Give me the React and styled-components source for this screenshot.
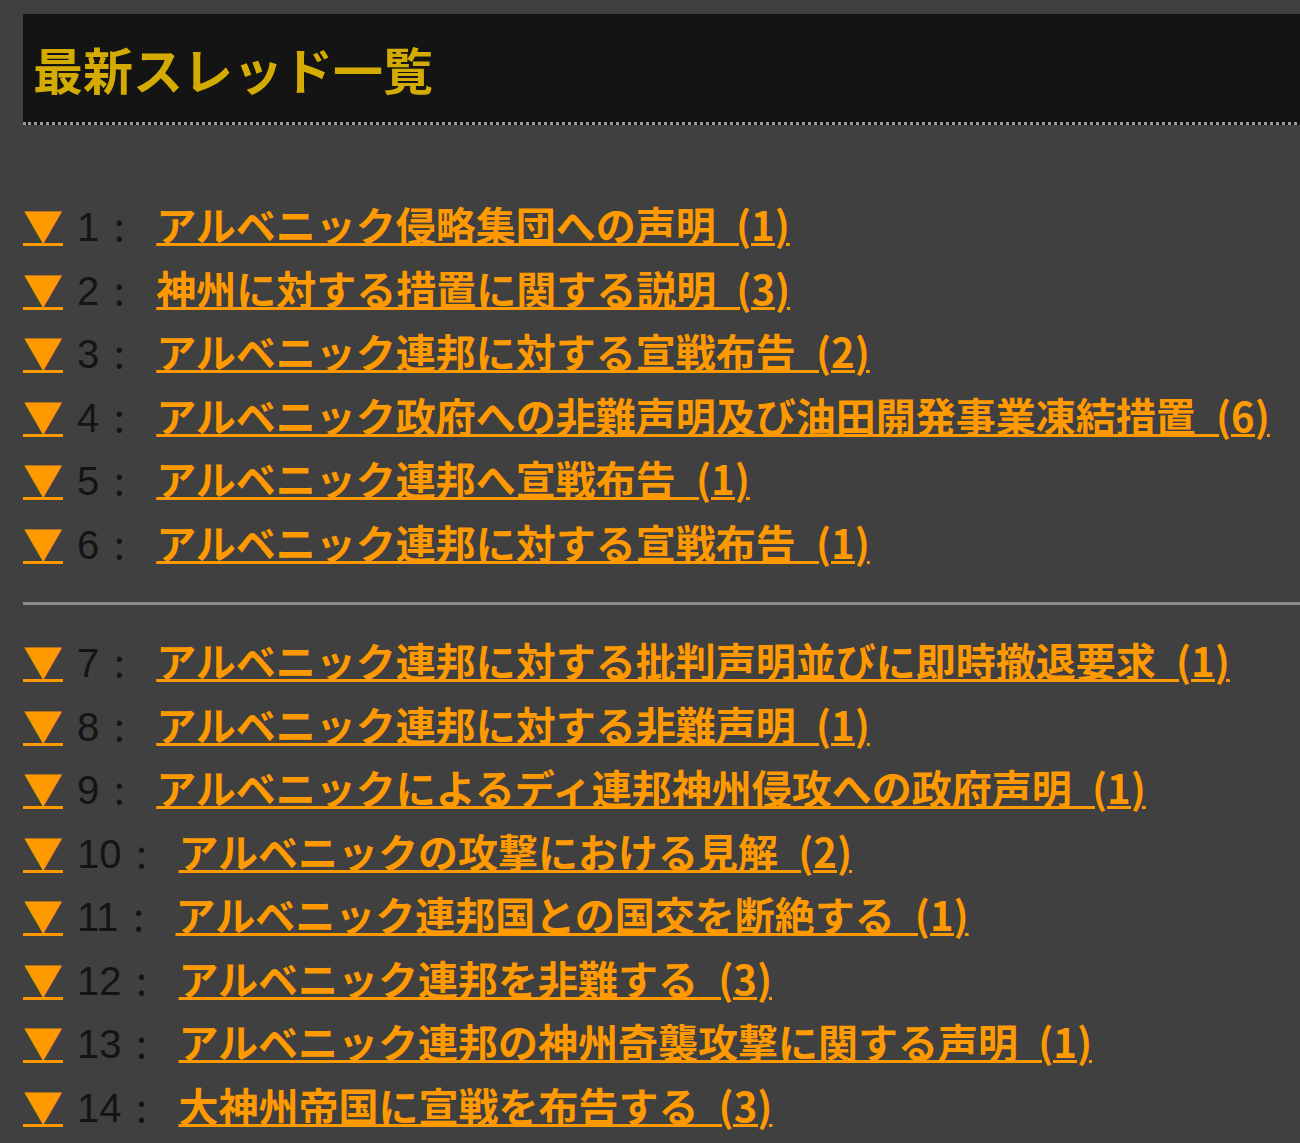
import React from 'react';
import styled, { createGlobalStyle } from 'styled-components';

const GlobalStyle = createGlobalStyle`
  html, body {
    margin: 0;
    padding: 0;
    background-color: #404040;
    overflow: hidden;
  }
  body {
    font-family: "Noto Sans CJK JP", "Noto Sans", sans-serif;
  }
`;

const Page = styled.div`
  width: 1400px;
  padding: 14px 0 0 23px;
`;

const Header = styled.header`
  background-color: #141414;
  height: 108px;
  display: flex;
  align-items: center;
  padding-left: 10px;
  border-bottom: 3px dotted #9a9a9a;
`;

const Title = styled.h1`
  margin: 0;
  font-size: 50px;
  font-weight: 700;
  color: #d4ab00;
`;

const ThreadList = styled.ul`
  list-style: none;
  margin: 0;
  padding: ${({ $top }) => $top}px 0 ${({ $bottom }) => $bottom}px;
`;

const Row = styled.li`
  height: 63.5px;
  line-height: 63.5px;
  font-size: 40px;
  white-space: nowrap;
`;

const Arrow = styled.a`
  color: #ff9900;
  text-decoration: underline;
  text-decoration-thickness: 3px;
  text-underline-offset: 2px;
  font-weight: 700;
  cursor: pointer;
`;

const Num = styled.span`
  color: #141414;
  font-family: "Liberation Sans", "Noto Sans CJK JP", sans-serif;
  margin-left: 14px;
`;

const Colon = styled.span`
  color: #141414;
  display: inline-block;
  width: 40px;
  text-align: center;
  margin-right: 17px;
`;

const ThreadLink = styled.a`
  color: #ff9900;
  font-weight: 700;
  word-spacing: 11px;
  text-decoration: underline;
  text-decoration-thickness: 3px;
  text-underline-offset: 2px;
  cursor: pointer;
`;

const Divider = styled.hr`
  margin: 0;
  border: 0;
  height: 3px;
  background-color: #8a8a8a;
`;

const top = [
  ['アルベニック侵略集団への声明', 1],
  ['神州に対する措置に関する説明', 3],
  ['アルベニック連邦に対する宣戦布告', 2],
  ['アルベニック政府への非難声明及び油田開発事業凍結措置', 6],
  ['アルベニック連邦へ宣戦布告', 1],
  ['アルベニック連邦に対する宣戦布告', 1],
];

const rest = [
  ['アルベニック連邦に対する批判声明並びに即時撤退要求', 1],
  ['アルベニック連邦に対する非難声明', 1],
  ['アルベニックによるディ連邦神州侵攻への政府声明', 1],
  ['アルベニックの攻撃における見解', 2],
  ['アルベニック連邦国との国交を断絶する', 1],
  ['アルベニック連邦を非難する', 3],
  ['アルベニック連邦の神州奇襲攻撃に関する声明', 1],
  ['大神州帝国に宣戦を布告する', 3],
];

const ThreadRow = ({ n, title, count }) => (
  <Row>
    <Arrow>▼</Arrow>
    <Num>{n}</Num>
    <Colon>:</Colon>
    <ThreadLink>{`${title} (${count})`}</ThreadLink>
  </Row>
);

export default function App() {
  return (
    <>
      <GlobalStyle />
      <Page>
        <Header>
          <Title>最新スレッド一覧</Title>
        </Header>
        <ThreadList $top={68} $bottom={28}>
          {top.map(([t, c], i) => (
            <ThreadRow key={i} n={i + 1} title={t} count={c} />
          ))}
        </ThreadList>
        <Divider />
        <ThreadList $top={24} $bottom={0}>
          {rest.map(([t, c], i) => (
            <ThreadRow key={i} n={i + 7} title={t} count={c} />
          ))}
        </ThreadList>
      </Page>
    </>
  );
}
